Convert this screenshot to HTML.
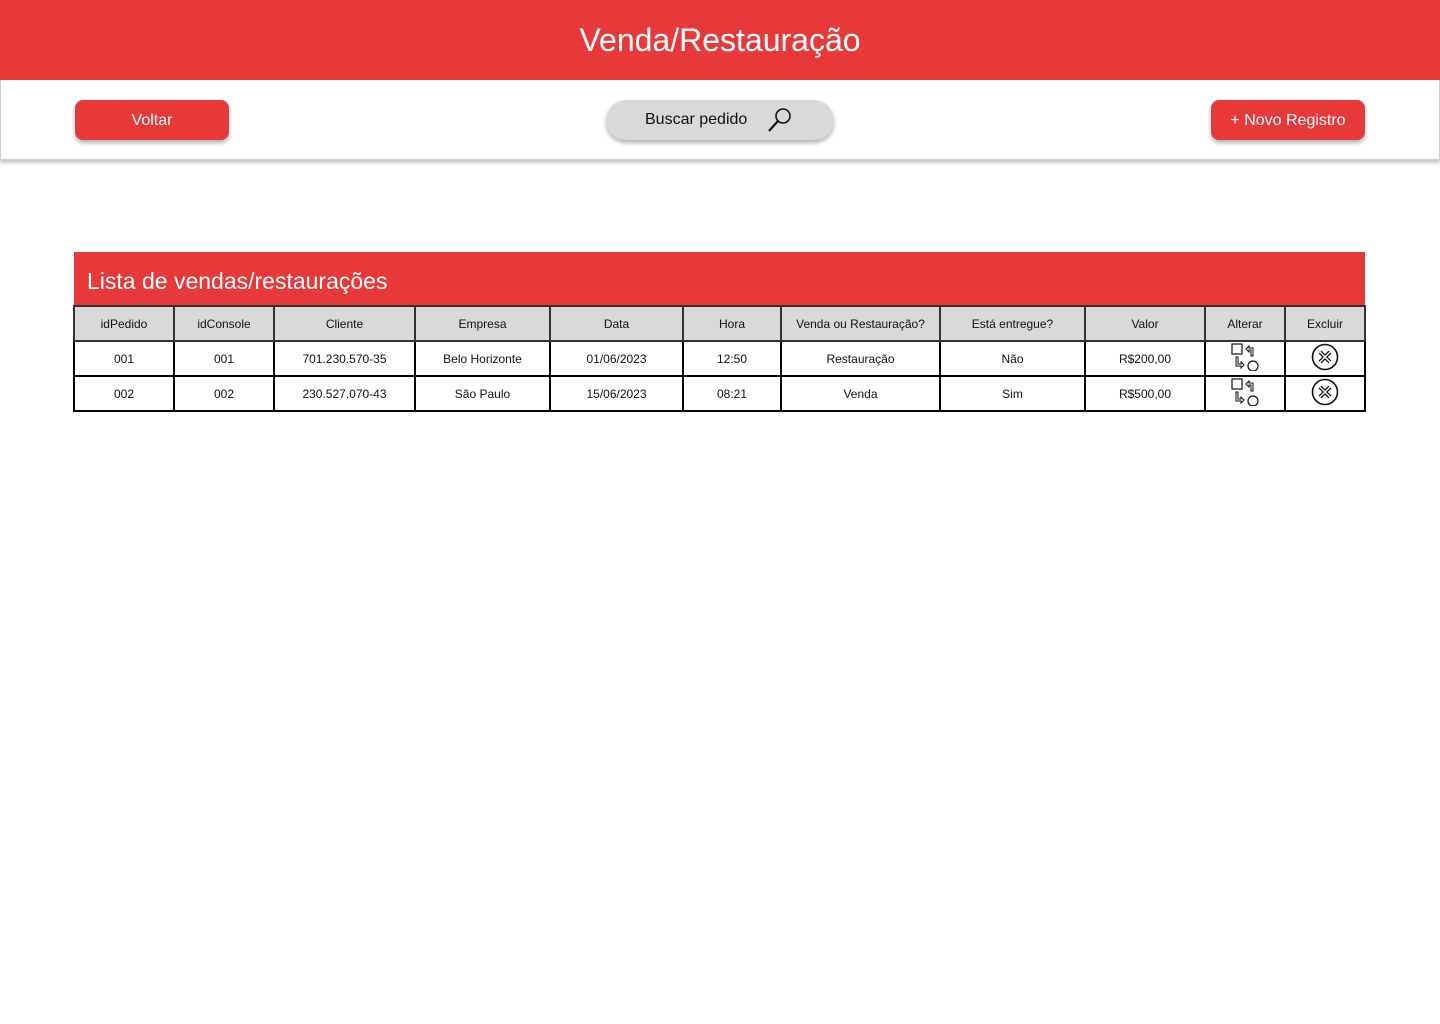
<!DOCTYPE html>
<html><head><meta charset="utf-8"><style>
*{box-sizing:border-box;margin:0;padding:0}
body{width:1440px;height:1024px;background:#fff;font-family:"Liberation Sans",sans-serif;position:relative;overflow:hidden}
.hdr{position:absolute;left:0;top:0;width:1440px;height:80px;background:#e8393a;color:#fff;font-size:32px;text-align:center;line-height:80px}
.bar{position:absolute;left:0;top:80px;width:1440px;height:80px;border:1px solid #d0d0d0;border-top:none;box-shadow:0 3px 3px #c8c8c8}
.btn{position:absolute;top:100px;height:40px;border-radius:8px;background:#e8393a;color:#fff;font-size:16px;text-align:center;line-height:42px;box-shadow:0 3px 4px rgba(0,0,0,.3)}
.search{position:absolute;left:606px;top:100px;width:228px;height:40px;border-radius:20px;background:#d9d9d9;box-shadow:0 3px 4px rgba(0,0,0,.3);font-size:16px;line-height:40px;padding-left:39px;color:#111}
.title{position:absolute;left:74px;top:252px;width:1291px;height:54px;background:#e8393a;color:#fff;font-size:23px;padding-left:13px;line-height:58px}
table{position:absolute;left:73px;top:305px;border-collapse:collapse;font-size:12px}
td{border:2px solid #000;text-align:center;height:35px;padding:0;color:#111}
tr.h td{background:#d9d9d9;border-color:#333}
</style></head><body>
<div class="hdr">Venda/Restauração</div>
<div class="bar"></div>
<div class="btn" style="left:75px;width:154px">Voltar</div>
<div class="search">Buscar pedido
<svg style="position:absolute;left:160px;top:6px" width="28" height="28" viewBox="0 0 28 28"><circle cx="17" cy="10" r="7" fill="none" stroke="#111" stroke-width="1.6"/><path d="M12 15L3 25" stroke="#111" stroke-width="2.2"/></svg></div>
<div class="btn" style="left:1211px;width:154px">+ Novo Registro</div>
<div class="title">Lista de vendas/restaurações</div>
<table>
<colgroup><col style="width:100px"><col style="width:100px"><col style="width:141px"><col style="width:135px"><col style="width:133px"><col style="width:98px"><col style="width:159px"><col style="width:145px"><col style="width:120px"><col style="width:80px"><col style="width:80px"></colgroup>
<tr class="h"><td>idPedido</td><td>idConsole</td><td>Cliente</td><td>Empresa</td><td>Data</td><td>Hora</td><td>Venda ou Restauração?</td><td>Está entregue?</td><td>Valor</td><td>Alterar</td><td>Excluir</td></tr>
<tr><td>001</td><td>001</td><td>701.230.570-35</td><td>Belo Horizonte</td><td>01/06/2023</td><td>12:50</td><td>Restauração</td><td>Não</td><td>R$200,00</td><td><svg width="30" height="28" viewBox="0 0 30 28"><rect x="2" y="1" width="10" height="10" fill="none" stroke="#111" stroke-width="1.2"/><path d="M16 6l3-3v2h4v8h-2V7h-2v2z" fill="none" stroke="#111"/><path d="M6 14v9h5v2l3-3-3-3v2H8v-7z" fill="none" stroke="#111"/><circle cx="23" cy="23" r="5" fill="none" stroke="#111" stroke-width="1.2"/></svg></td><td><svg width="28" height="28" viewBox="0 0 28 28"><circle cx="14" cy="14" r="12.5" fill="none" stroke="#111" stroke-width="1.6"/><path d="M9 9l10 10M19 9L9 19" stroke="#111" stroke-width="4"/><path d="M9 9l10 10M19 9L9 19" stroke="#fff" stroke-width="1.5"/></svg></td></tr>
<tr><td>002</td><td>002</td><td>230.527.070-43</td><td>São Paulo</td><td>15/06/2023</td><td>08:21</td><td>Venda</td><td>Sim</td><td>R$500,00</td><td><svg width="30" height="28" viewBox="0 0 30 28"><rect x="2" y="1" width="10" height="10" fill="none" stroke="#111" stroke-width="1.2"/><path d="M16 6l3-3v2h4v8h-2V7h-2v2z" fill="none" stroke="#111"/><path d="M6 14v9h5v2l3-3-3-3v2H8v-7z" fill="none" stroke="#111"/><circle cx="23" cy="23" r="5" fill="none" stroke="#111" stroke-width="1.2"/></svg></td><td><svg width="28" height="28" viewBox="0 0 28 28"><circle cx="14" cy="14" r="12.5" fill="none" stroke="#111" stroke-width="1.6"/><path d="M9 9l10 10M19 9L9 19" stroke="#111" stroke-width="4"/><path d="M9 9l10 10M19 9L9 19" stroke="#fff" stroke-width="1.5"/></svg></td></tr>
</table>
</body></html>
